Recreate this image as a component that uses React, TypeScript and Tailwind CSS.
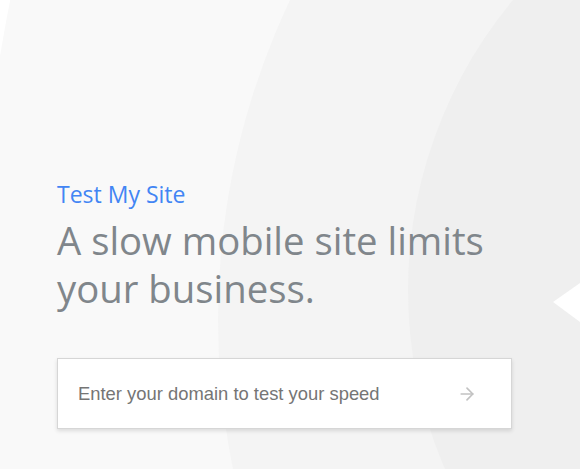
import { ArrowRight } from 'lucide-react';

function Backdrop() {
  return (
    <svg
      className="absolute inset-0 h-full w-full"
      viewBox="0 0 580 469"
      preserveAspectRatio="none"
      aria-hidden="true"
    >
      <rect width="580" height="469" fill="#ffffff" />
      <circle cx="1655" cy="327" r="1677" fill="#f9f9f9" />
      <circle cx="965" cy="320" r="747" fill="#f4f4f4" />
      <circle cx="861" cy="290" r="453" fill="#efefef" />
      <polygon points="553,302 580,283 580,322" fill="#ffffff" />
    </svg>
  );
}

export default function App() {
  return (
    <div className="relative h-[469px] w-[580px] overflow-hidden">
      <Backdrop />
      <div className="relative pl-[57px] pt-[180px]">
        <p
          className="text-[23px] leading-[28px] text-[#4285f4]"
          style={{ fontFamily: '"Open Sans", sans-serif' }}
        >
          Test My Site
        </p>
        <h1
          className="mt-[8px] text-[38.3px] leading-[48px] text-[#80868b]"
          style={{ fontFamily: '"Open Sans", sans-serif' }}
        >
          A slow mobile site limits
          <br />
          your business.
        </h1>
        <div className="mt-[46px] flex h-[71px] w-[455px] items-center justify-between border border-[#d6d6d6] bg-white pl-[20px] pr-[34px] shadow-[0_2px_4px_rgba(0,0,0,0.12)]">
          <span
            className="text-[18.4px] text-[#757575]"
            style={{ fontFamily: '"Liberation Sans", Arial, sans-serif' }}
          >
            Enter your domain to test your speed
          </span>
          <ArrowRight className="h-[20px] w-[20px] text-[#c2c2c2]" strokeWidth={2} />
        </div>
      </div>
    </div>
  );
}
